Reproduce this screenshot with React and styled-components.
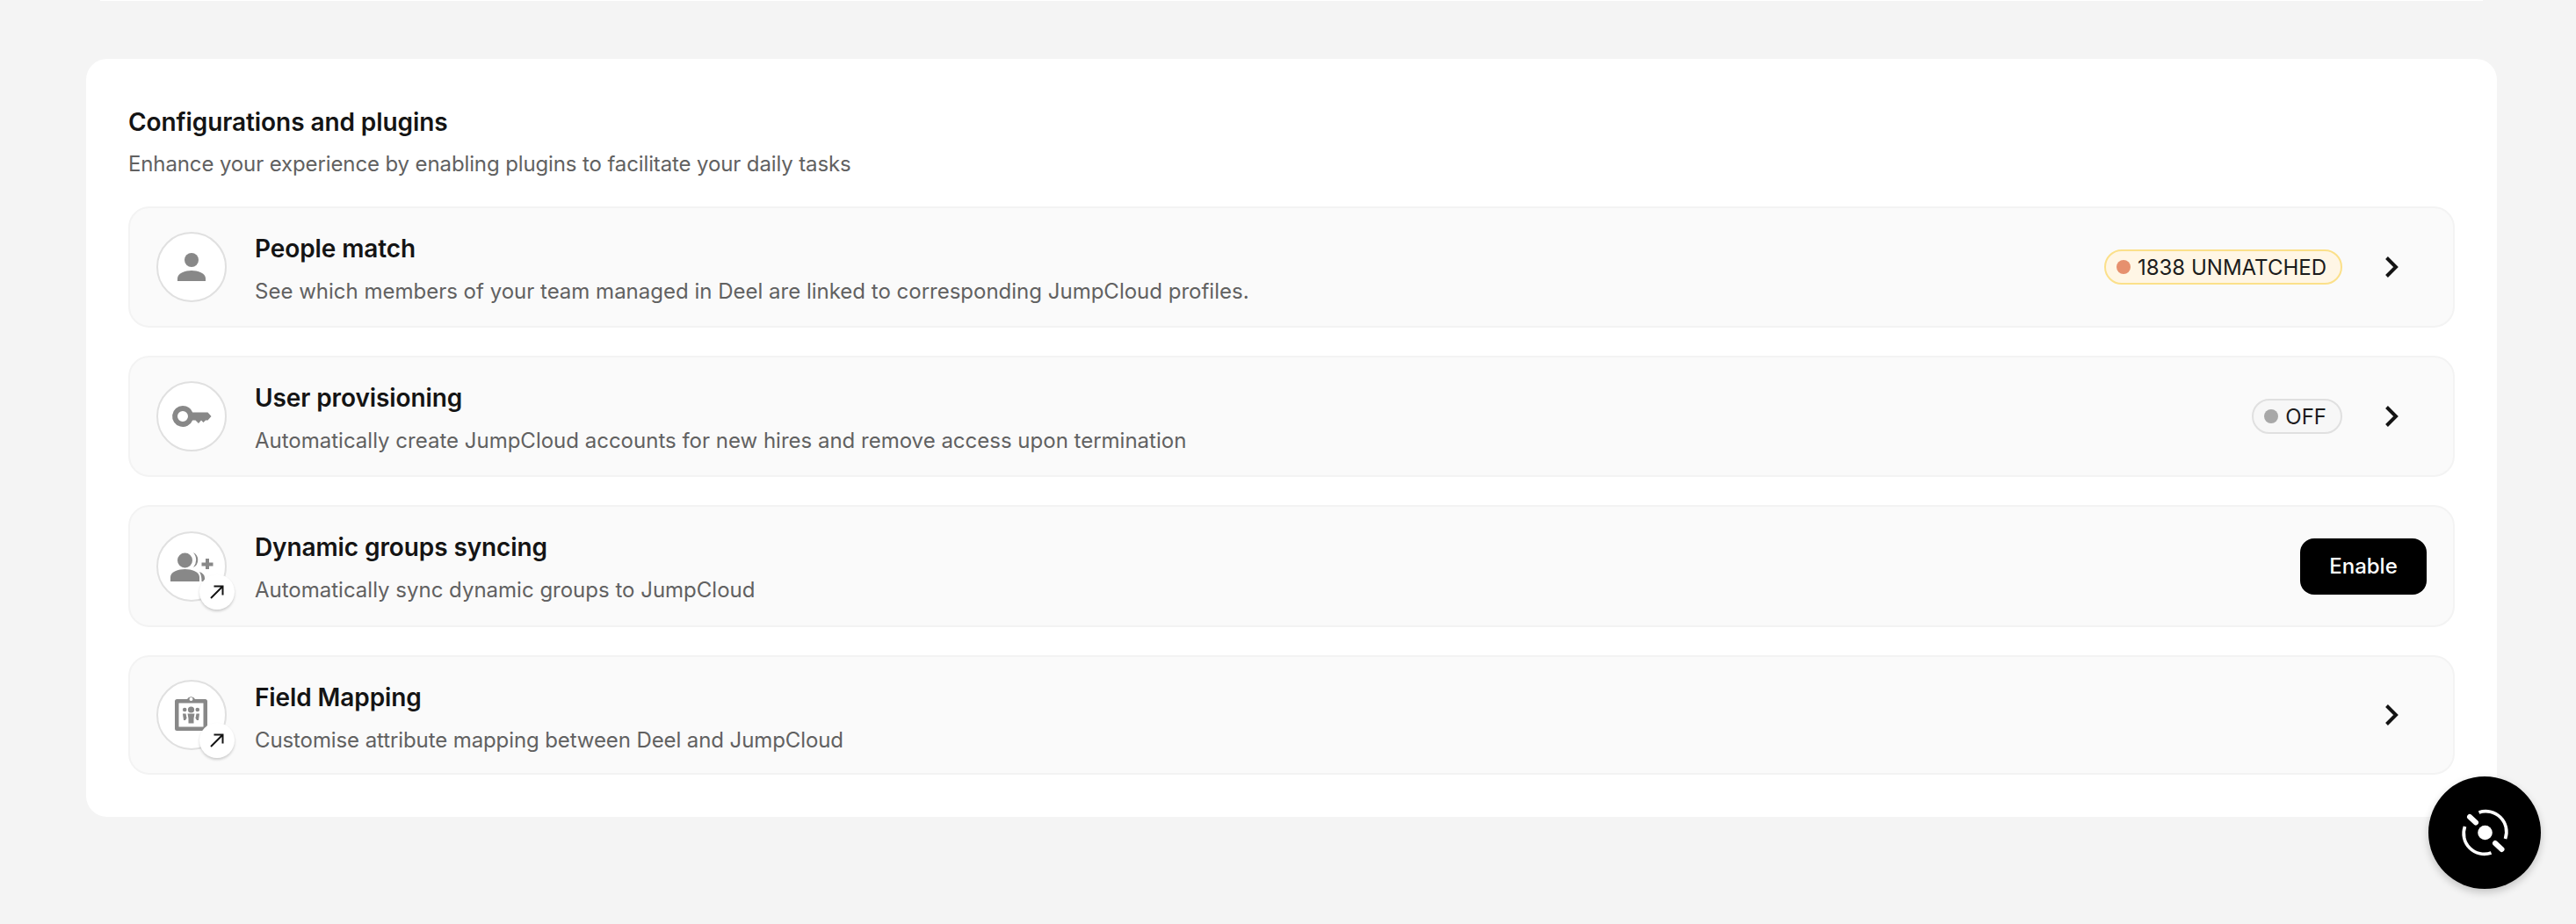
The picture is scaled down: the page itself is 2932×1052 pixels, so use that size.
import React from 'react';
import styled, { createGlobalStyle } from 'styled-components';

const GlobalStyle = createGlobalStyle`
  html, body {
    margin: 0;
    padding: 0;
    height: 100%;
    overflow: hidden;
    background: #f4f4f4;
    font-family: Inter, "Liberation Sans", sans-serif;
    -webkit-font-smoothing: antialiased;
  }
`;

const Page = styled.div`
  height: 1052px;
  padding: 0 90px 0 98px;
  box-sizing: border-box;
`;

const PrevCardEdge = styled.div`
  height: 1px;
  margin: 0 16px 66px 16px;
  background: #fff;
`;

const Card = styled.section`
  background: #fff;
  border-radius: 24px;
  padding: 52px 48px 48px 48px;
  height: 863px;
  box-sizing: border-box;
`;

const Heading = styled.h2`
  margin: 0;
  font-size: 28px;
  line-height: 40px;
  font-weight: 600;
  letter-spacing: -0.08px;
  color: #141414;
`;

const Subheading = styled.p`
  margin: 8px 0 0;
  font-size: 24px;
  line-height: 40px;
  font-weight: 400;
  letter-spacing: -0.12px;
  color: #616161;
`;

const List = styled.div`
  margin-top: 28px;
  display: flex;
  flex-direction: column;
  gap: 32px;
`;

const Row = styled.div`
  display: flex;
  align-items: center;
  gap: 32px;
  height: ${p => p.$height}px;
  box-sizing: border-box;
  padding: 0 30px;
  background: #fafafa;
  border: 2px solid #f3f3f3;
  border-radius: 24px;
`;

const IconWrap = styled.div`
  position: relative;
  flex: none;
  width: 80px;
  height: 80px;
`;

const IconCircle = styled.div`
  width: 100%;
  height: 100%;
  box-sizing: border-box;
  display: flex;
  align-items: center;
  justify-content: center;
  background: #fff;
  border: 2px solid #e0e0e0;
  border-radius: 50%;
`;

const LinkBadge = styled.span`
  position: absolute;
  right: -9px;
  bottom: -9px;
  width: 40px;
  height: 40px;
  display: flex;
  align-items: center;
  justify-content: center;
  background: #fff;
  border-radius: 50%;
  box-shadow: 0 2px 3px rgba(0, 0, 0, 0.18);
`;

const Body = styled.div`
  flex: 1;
  min-width: 0;
  align-self: flex-start;
  margin-top: 26px;
`;

const Title = styled.div`
  font-size: 28px;
  line-height: 40px;
  font-weight: 600;
  letter-spacing: -0.1px;
  color: #141414;
`;

const Description = styled.div`
  margin-top: 9px;
  font-size: 24px;
  line-height: 40px;
  letter-spacing: ${p => p.$tight ? '-0.1px' : '0'};
  color: #616161;
`;

const Status = styled.span`
  display: inline-flex;
  align-items: center;
  gap: 8px;
  height: 40px;
  box-sizing: border-box;
  padding: 0 16px 0 12px;
  border-radius: 20px;
  border: 2px solid ${p => (p.$tone === 'warn' ? '#fbe08a' : '#e0e0e0')};
  background: ${p => (p.$tone === 'warn' ? '#fff6e5' : '#f7f7f7')};
  font-size: 24px;
  color: #1c1c1c;
`;

const Dot = styled.i`
  width: 16px;
  height: 16px;
  border-radius: 50%;
  background: ${p => (p.$tone === 'warn' ? '#e6906e' : '#a8a8a8')};
`;

const Chevron = styled.span`
  flex: none;
  width: 32px;
  height: 32px;
  margin: 0 24px 0 8px;
  display: flex;
  align-items: center;
  justify-content: center;
`;

const EnableButton = styled.button`
  flex: none;
  width: 144px;
  height: 64px;
  border: 0;
  border-radius: 16px;
  background: #000;
  color: #fff;
  font-family: inherit;
  font-size: 24px;
  font-weight: 500;
`;

const Fab = styled.button`
  position: fixed;
  right: 40px;
  bottom: 40px;
  width: 128px;
  height: 128px;
  border: 0;
  padding: 0;
  border-radius: 50%;
  background: #000;
  display: flex;
  align-items: center;
  justify-content: center;
  box-shadow: 0 4px 10px rgba(0, 0, 0, 0.2);
`;

const GREY = '#888';

const PersonIcon = () => (
  <svg width="44" height="44" viewBox="0 0 44 44" fill={GREY}>
    <circle cx="22" cy="14" r="8" />
    <path d="M6 38v-3c0-6 9-9 16-9s16 3 16 9v3z" />
  </svg>
);

const KeyIcon = () => (
  <svg width="48" height="48" viewBox="0 0 48 48" fill={GREY}>
    <path
      fillRule="evenodd"
      d="M14 12a12 12 0 0 1 11.200 7.500H42.500L46.500 24l-4 4.500H40l-2.500 2.500-2.500-2.500-3 3.500-3.500-3.500h-3.300A12 12 0 1 1 14 12zm0 6a6 6 0 1 0 0 12 6 6 0 0 0 0-12z"
    />
  </svg>
);

const GroupAddIcon = () => (
  <svg width="56" height="44" viewBox="0 0 56 44" fill={GREY}>
    <circle cx="20.500" cy="15" r="8.500" />
    <path d="M4 39v-5c0-6 9-9 16.500-9S37 28 37 34v5z" />
    <path d="M30 6a9.500 9.500 0 0 1 0 17 13 13 0 0 0 0-17z" />
    <path d="M37 28c4 1.500 6 4 6 7v4h-3.500c0-4-.5-8-2.500-11z" />
    <path d="M44 13h4v4.500h4.500v4H48V25h-4v-3.500h-4.500v-4H44z" />
  </svg>
);

const ClipboardIcon = () => (
  <svg width="44" height="48" viewBox="0 0 44 48" fill={GREY}>
    <path
      fillRule="evenodd"
      d="M5.500 6H17a5 5 0 0 1 9 0h11.500A2.500 2.500 0 0 1 40 8.500v31a2.500 2.500 0 0 1-2.500 2.500h-32A2.500 2.500 0 0 1 3 39.500v-31A2.500 2.500 0 0 1 5.500 6zM7.500 10.500v27h28v-27zM21.500 4a2 2 0 1 0 0 4 2 2 0 0 0 0-4z"
    />
    <circle cx="21.500" cy="18" r="3.600" />
    <circle cx="14.200" cy="18" r="2.300" />
    <circle cx="28.800" cy="18" r="2.300" />
    <path d="M17.500 22.500h8L24.500 28v5.500h-6V28z" />
    <path d="M12 22.500h3.500l1 5-1.500 2.500h-2z" />
    <path d="M31 22.500h-3.500l-1 5 1.500 2.500h2z" />
  </svg>
);

const ArrowUpRight = () => (
  <svg width="18" height="18" viewBox="0 0 18 18" fill="none" stroke="#141414" strokeWidth="2">
    <path d="M2 16 15.500 2.500M5.500 2.500h10v10" />
  </svg>
);

const ChevronRight = () => (
  <svg width="32" height="32" viewBox="0 0 32 32" fill="none" stroke="#141414" strokeWidth="4">
    <path d="M10.500 5.500 21 16 10.500 26.500" />
  </svg>
);

const FabIcon = () => (
  <svg width="56" height="56" viewBox="0 0 56 56" fill="none" stroke="#fff" strokeWidth="3.700">
    <circle cx="28.500" cy="28" r="8.300" fill="#fff" stroke="none" />
    <path d="M21.500 5A23.500 23.500 0 0 1 51.500 35M35.500 51A23.500 23.500 0 0 1 5.500 21" />
    <path d="M11 10l7 6.500M40 40l7.500 7" strokeWidth="6" strokeLinecap="round" />
  </svg>
);

const rows = [
  {
    title: 'People match',
    text: 'See which members of your team managed in Deel are linked to corresponding JumpCloud profiles.',
    icon: <PersonIcon />,
    status: { tone: 'warn', label: '1838 UNMATCHED' },
    height: 138,
    chevron: true,
  },
  {
    title: 'User provisioning',
    text: 'Automatically create JumpCloud accounts for new hires and remove access upon termination',
    icon: <KeyIcon />,
    status: { tone: 'off', label: 'OFF' },
    height: 138,
    chevron: true,
  },
  {
    title: 'Dynamic groups syncing',
    text: 'Automatically sync dynamic groups to JumpCloud',
    icon: <GroupAddIcon />,
    external: true,
    button: 'Enable',
    height: 139,
  },
  {
    title: 'Field Mapping',
    text: 'Customise attribute mapping between Deel and JumpCloud',
    tight: true,
    icon: <ClipboardIcon />,
    external: true,
    height: 136,
    chevron: true,
  },
];

export default function App() {
  return (
    <Page>
      <GlobalStyle />
      <PrevCardEdge />
      <Card>
        <Heading>Configurations and plugins</Heading>
        <Subheading>Enhance your experience by enabling plugins to facilitate your daily tasks</Subheading>
        <List>
          {rows.map(row => (
            <Row key={row.title} $height={row.height}>
              <IconWrap>
                <IconCircle>{row.icon}</IconCircle>
                {row.external && (
                  <LinkBadge>
                    <ArrowUpRight />
                  </LinkBadge>
                )}
              </IconWrap>
              <Body>
                <Title>{row.title}</Title>
                <Description $tight={row.tight}>{row.text}</Description>
              </Body>
              {row.status && (
                <Status $tone={row.status.tone}>
                  <Dot $tone={row.status.tone} />
                  {row.status.label}
                </Status>
              )}
              {row.chevron && (
                <Chevron>
                  <ChevronRight />
                </Chevron>
              )}
              {row.button && <EnableButton>{row.button}</EnableButton>}
            </Row>
          ))}
        </List>
      </Card>
      <Fab aria-label="Assistant">
        <FabIcon />
      </Fab>
    </Page>
  );
}
